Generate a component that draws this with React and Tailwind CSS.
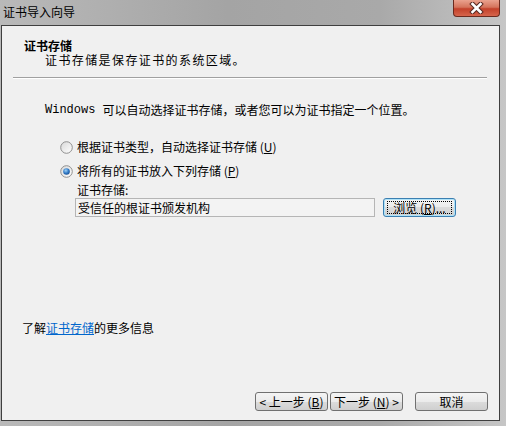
const cjk = "font-['Microsoft_YaHei','Noto_Sans_CJK_SC',sans-serif]";

function Radio({ checked }) {
  return (
    <svg width="13" height="13" viewBox="0 0 13 13" className="shrink-0">
      <defs>
        <linearGradient id={checked ? "rg1" : "rg0"} x1="0" y1="0" x2="1" y2="1">
          <stop offset="0" stopColor="#d8d8d8" />
          <stop offset="1" stopColor="#ffffff" />
        </linearGradient>
        <radialGradient id="dot" cx="0.4" cy="0.35" r="0.7">
          <stop offset="0" stopColor="#9fd2f7" />
          <stop offset="0.6" stopColor="#2e77c4" />
          <stop offset="1" stopColor="#1c4f8f" />
        </radialGradient>
      </defs>
      <circle cx="6.5" cy="6.5" r="5.8" fill={`url(#${checked ? "rg1" : "rg0"})`} stroke="#8f8f8f" strokeWidth="1" />
      {checked && <circle cx="6.5" cy="6.5" r="3.3" fill="url(#dot)" />}
    </svg>
  );
}

function Btn({ children, focused, className = "" }) {
  return (
    <div
      className={`flex h-[19px] w-[73px] items-center justify-center rounded-[3px] border text-[12px] leading-none text-black bg-[linear-gradient(#f4f4f4,#ebebeb_50%,#dcdcdc_50%,#cfcfcf)] ${
        focused ? "border-[#3c7fb1] shadow-[inset_0_0_0_1px_#aee3f9]" : "border-[#707070]"
      } ${className}`}
    >
      {focused ? (
        <span className="flex h-[13px] w-[65px] items-center justify-center border border-dotted border-black">{children}</span>
      ) : (
        children
      )}
    </div>
  );
}

export default function App() {
  return (
    <div className={`h-[426px] w-[506px] overflow-hidden bg-[linear-gradient(90deg,#b9b9b9,#a4a4a4_45%,#a9a9a9_75%,#c6c6c6)] ${cjk}`}>
      {/* title bar */}
      <div className="flex h-[25px] items-start">
        <span className="ml-[3px] mt-[5px] text-[12px] leading-[14px] text-black">证书导入向导</span>
        <div className="ml-auto mr-[6px] flex h-[17px] w-[47px] items-center justify-center rounded-b-[4px] border border-t-0 border-[#6b2a1e] bg-[linear-gradient(#eaa28e,#d5745c_45%,#c3412a_55%,#d6654c)]">
          <svg width="15" height="12" viewBox="0 0 15 12">
            <path d="M3.5 2 L11.5 10 M11.5 2 L3.5 10" stroke="#5a2a22" strokeWidth="4.6" strokeLinecap="square" />
            <path d="M3.5 2 L11.5 10 M11.5 2 L3.5 10" stroke="#ffffff" strokeWidth="2.6" strokeLinecap="square" />
          </svg>
        </div>
      </div>

      {/* body */}
      <div className="ml-px flex h-[396px] w-[499px] flex-col border border-[#3f3f3f] bg-[#f0f0f0] text-[12px] text-black">
        <div className="ml-[22px] mt-[13px] h-[14px] font-bold leading-[14px]">证书存储</div>
        <div className="ml-[43px] h-[14px] text-[12px] tracking-[1.4px] leading-[14px]">证书存储是保存证书的系统区域。</div>
        <div className="ml-[11px] mt-[10px] w-[474px] border-t border-b border-t-[#a0a0a0] border-b-white" />

        <div className="ml-[43px] mt-[23px] flex h-[16px] items-center leading-[16px]">
          <span className="font-['Liberation_Mono',monospace] text-[12px]">Windows</span>
          <span className="ml-[7px]">可以自动选择证书存储，或者您可以为证书指定一个位置。</span>
        </div>

        <div className="ml-[58px] mt-[21px] flex h-[16px] items-center gap-[4px] leading-[16px]">
          <Radio checked={false} />
          <span>根据证书类型，自动选择证书存储 (<span className="underline">U</span>)</span>
        </div>
        <div className="ml-[58px] mt-[8px] flex h-[16px] items-center gap-[4px] leading-[16px]">
          <Radio checked />
          <span>将所有的证书放入下列存储 (<span className="underline">P</span>)</span>
        </div>

        <div className="ml-[75px] mt-[3px] h-[16px] leading-[16px]">证书存储:</div>
        <div className="ml-[73px] flex items-center">
          <div className="flex h-[19px] w-[300px] items-center border border-[#b5b5b5] bg-[#f3f3f3] pl-[2px] leading-[16px]">
            受信任的根证书颁发机构
          </div>
          <Btn focused className="ml-[8px]">
            浏览 (<span className="underline">R</span>)...
          </Btn>
        </div>

        <div className="ml-[20px] mt-[103px] h-[16px] leading-[16px]">
          了解<span className="text-[#0066cc] underline">证书存储</span>的更多信息
        </div>

        <div className="ml-[253px] mt-[56px] flex items-center">
          <Btn>
            &lt; 上一步 (<span className="underline">B</span>)
          </Btn>
          <Btn className="ml-[2px]">
            下一步 (<span className="underline">N</span>) &gt;
          </Btn>
          <Btn className="ml-[12px]">取消</Btn>
        </div>
      </div>
    </div>
  );
}
